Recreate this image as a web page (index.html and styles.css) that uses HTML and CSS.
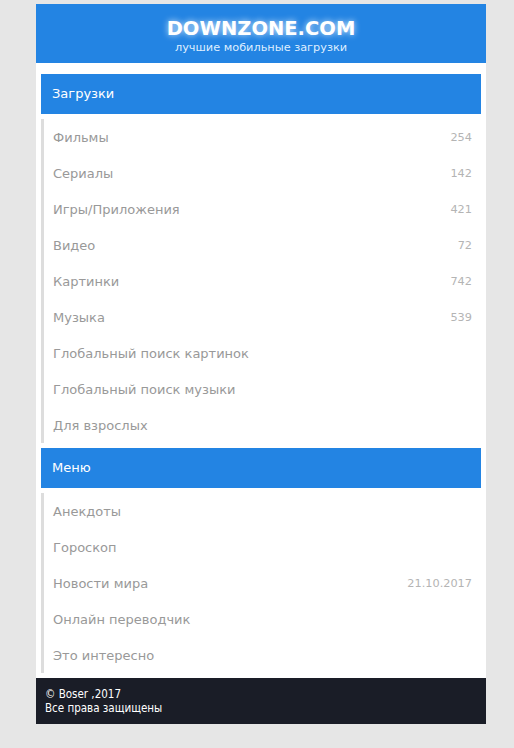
FILE: index.html
```html
<!DOCTYPE html>
<html lang="ru">
<head>
  <meta charset="UTF-8" />
  <title>DOWNZONE.COM</title>
  <meta name="viewport" content="width=device-width, initial-scale=1.0"/>
  <link rel="stylesheet" href="styles.css">
</head>
<body>

  <div class="page">
    <header class="head">
      <div class="logo">DOWNZONE.COM</div>
      <div class="slogan">лучшие мобильные загрузки</div>
    </header>

    <div class="title">Загрузки</div>
    <ul class="menu">
      <li><a href="#">Фильмы</a><span class="count">254</span></li>
      <li><a href="#">Сериалы</a><span class="count">142</span></li>
      <li><a href="#">Игры/Приложения</a><span class="count">421</span></li>
      <li><a href="#">Видео</a><span class="count">72</span></li>
      <li><a href="#">Картинки</a><span class="count">742</span></li>
      <li><a href="#">Музыка</a><span class="count">539</span></li>
      <li><a href="#">Глобальный поиск картинок</a></li>
      <li><a href="#">Глобальный поиск музыки</a></li>
      <li><a href="#">Для взрослых</a></li>
    </ul>

    <div class="title">Меню</div>
    <ul class="menu">
      <li><a href="#">Анекдоты</a></li>
      <li><a href="#">Гороскоп</a></li>
      <li><a href="#">Новости мира</a><span class="count">21.10.2017</span></li>
      <li><a href="#">Онлайн переводчик</a></li>
      <li><a href="#">Это интересно</a></li>
    </ul>

    <footer class="foot">
      &copy; Boser ,2017<br>
      Все права защищены
    </footer>
  </div>

</body>
</html>
```

FILE: styles.css
```css
:root {
  --blue:   #2384e3;
  --bg:     #e6e6e6;
  --gray:   #999999;
  --dark:   #1a1d27;
}

* {
  box-sizing: border-box;
  margin: 0;
  padding: 0;
}

body {
  font-family: 'DejaVu Sans', Verdana, sans-serif;
  background: var(--bg);
  padding-top: 4px;
}

.page {
  width: 450px;
  margin-left: 36px;
  background: #fff;
}

.head {
  background: var(--blue);
  height: 59px;
  text-align: center;
  padding-top: 13px;
  color: #fff;
}

.logo {
  font-size: 19.5px;
  font-weight: bold;
  line-height: 24px;
  text-shadow: 0 0 6px rgba(255,255,255,0.8);
}

.slogan {
  font-size: 11.3px;
  line-height: 14px;
  color: #dfeeff;
}

.title {
  background: var(--blue);
  color: #fff;
  font-size: 13px;
  height: 40px;
  line-height: 40px;
  padding-left: 11px;
  margin: 11px 5px 5px;
}

.menu + .title {
  margin-top: 5px;
}

.menu {
  list-style: none;
  margin: 0 5px;
  border-left: 3px solid #dddddd;
}

.menu li {
  display: flex;
  justify-content: space-between;
  height: 36px;
  line-height: 37px;
  padding: 0 9px;
  font-size: 13px;
}

.menu a {
  color: var(--gray);
  text-decoration: none;
}

.count {
  color: #b4b4b4;
  font-size: 11.3px;
}

.foot {
  margin-top: 5px;
  background: var(--dark);
  color: #fff;
  font-family: 'DejaVu Sans Condensed', 'DejaVu Sans', sans-serif;
  font-size: 11.5px;
  line-height: 14px;
  padding: 9px 9px;
  height: 46px;
}
```
